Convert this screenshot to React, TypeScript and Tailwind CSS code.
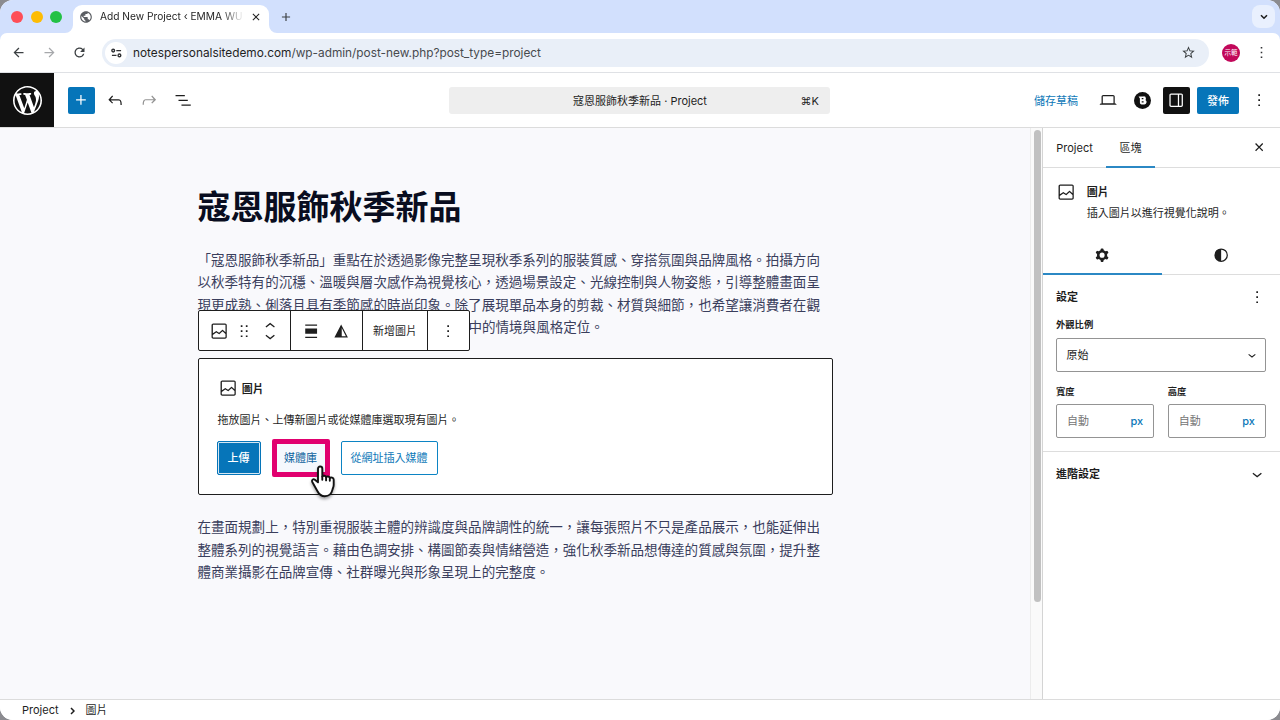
import type { ReactNode } from "react";
import { MdPublic, MdArrowBack, MdArrowForward, MdRefresh, MdStarBorder, MdClose, MdAdd } from "react-icons/md";

const paths = {
  plus: "M11 12.5V17.5H12.5V12.5H17.5V11H12.5V6H11V11H6V12.5H11Z",
  undo: "M18.3 11.7c-.6-.6-1.4-.9-2.3-.9H6.7l2.9-3.3-1.1-1-4.5 5L8.5 16l1-1-2.7-2.7H16c.5 0 .9.2 1.3.5 1 1 1 3.4 1 4.5v.3h1.5v-.2c0-1.5 0-4.3-1.5-5.7z",
  redo: "M15.6 6.5l-1.1 1 2.9 3.3H8c-.9 0-1.7.3-2.3.9-1.4 1.5-1.4 4.2-1.4 5.6v.2h1.5v-.3c0-1.1 0-3.5 1-4.5.3-.3.7-.5 1.3-.5h9.2L14.5 15l1.1 1.1 4.6-4.6-4.6-5z",
  listView: "M3 6h11v1.5H3V6Zm3.5 5.5h11V13h-11v-1.5ZM21 17H10v1.5h11V17Z",
  laptop:
    "M20.5 16h-.7V8c0-1.1-.9-2-2-2H6.2c-1.1 0-2 .9-2 2v8h-.7c-.8 0-1.5.7-1.5 1.5h20c0-.8-.7-1.5-1.5-1.5zM5.7 8c0-.3.2-.5.5-.5h11.6c.3 0 .5.2.5.5v7.6H5.7V8z",
  drawer:
    "M18 4H6c-1.1 0-2 .9-2 2v12c0 1.1.9 2 2 2h12c1.1 0 2-.9 2-2V6c0-1.1-.9-2-2-2zm-4 14.5H6c-.3 0-.5-.2-.5-.5V6c0-.3.2-.5.5-.5h8v13zm4.5-.5c0 .3-.2.5-.5.5h-2.5v-13H18c.3 0 .5.2.5.5v12z",
  more: "M13 19h-2v-2h2v2zm0-6h-2v-2h2v2zm0-6h-2V5h2v2z",
  close:
    "M12 13.06l3.712 3.713 1.061-1.06L13.061 12l3.712-3.712-1.06-1.06L12 10.938 8.288 7.227l-1.061 1.06L10.939 12l-3.712 3.712 1.06 1.061L12 13.061z",
  image:
    "M19 3H5c-1.1 0-2 .9-2 2v14c0 1.1.9 2 2 2h14c1.1 0 2-.9 2-2V5c0-1.1-.9-2-2-2zM5 4.5h14c.3 0 .5.2.5.5v8.4l-3-2.9c-.3-.3-.8-.3-1 0L11.9 14 9 12c-.3-.2-.6-.2-.8 0l-3.6 2.6V5c-.1-.3.1-.5.4-.5zm14 15H5c-.3 0-.5-.2-.5-.5v-2.4l4.1-3 3 1.9c.3.2.7.2.9-.1L16 12l3.5 3.4V19c0 .3-.2.5-.5.5z",
  drag: "M8 7h2V5H8v2zm0 6h2v-2H8v2zm0 6h2v-2H8v2zm6-14v2h2V5h-2zm0 8h2v-2h-2v2zm0 6h2v-2h-2v2z",
  up: "M6.5 12.4L12 8l5.5 4.4-.9 1.2L12 10l-4.5 3.6-1-1.2z",
  down: "M17.5 11.6L12 16l-5.5-4.4.9-1.2L12 14l4.5-3.6 1 1.2z",
  align: "M19 5.5H5V4h14v1.5ZM19 20H5v-1.5h14V20ZM5 9h14v6H5V9Z",
  duotone: "M12 4L4 19.5h16L12 4Zm.7 4.4l4.9 9.7h-4.9V8.4Z",
  cog: "M10.289 4.836A1 1 0 0111.275 4h1.306a1 1 0 01.987.836l.244 1.466c.787.26 1.503.679 2.108 1.218l1.393-.522a1 1 0 011.216.437l.653 1.13a1 1 0 01-.23 1.273l-1.148.944a6.025 6.025 0 010 2.435l1.149.946a1 1 0 01.23 1.272l-.653 1.13a1 1 0 01-1.216.437l-1.394-.522c-.605.54-1.32.958-2.108 1.218l-.244 1.466a1 1 0 01-.987.836h-1.306a1 1 0 01-.986-.836l-.244-1.466a5.995 5.995 0 01-2.108-1.218l-1.394.522a1 1 0 01-1.217-.436l-.653-1.131a1 1 0 01.23-1.272l1.149-.946a6.026 6.026 0 010-2.435l-1.148-.944a1 1 0 01-.23-1.272l.653-1.131a1 1 0 011.217-.437l1.393.522a5.994 5.994 0 012.108-1.218l.244-1.466zM14.929 12a3 3 0 11-6 0 3 3 0 016 0z",
  styles: "M20 12a8 8 0 1 1-16 0 8 8 0 0 1 16 0Zm-1.5 0a6.5 6.5 0 0 1-6.5 6.5v-13a6.5 6.5 0 0 1 6.5 6.5Z"
};

const introLines = [
  "「寇恩服飾秋季新品」重點在於透過影像完整呈現秋季系列的服裝質感、穿搭氛圍與品牌風格。拍攝方向",
  "以秋季特有的沉穩、溫暖與層次感作為視覺核心，透過場景設定、光線控制與人物姿態，引導整體畫面呈",
  "現更成熟、俐落且具有季節感的時尚印象。除了展現單品本身的剪裁、材質與細節，也希望讓消費者在觀"
];

const outroLines = [
  "在畫面規劃上，特別重視服裝主體的辨識度與品牌調性的統一，讓每張照片不只是產品展示，也能延伸出",
  "整體系列的視覺語言。藉由色調安排、構圖節奏與情緒營造，強化秋季新品想傳達的質感與氛圍，提升整",
  "體商業攝影在品牌宣傳、社群曝光與形象呈現上的完整度。"
];

function Icon({ name, size = 20.3, className = "" }: { name: keyof typeof paths; size?: number; className?: string }) {
  return (
    <svg viewBox="0 0 24 24" width={size} height={size} fill="currentColor" fillRule="evenodd" className={`shrink-0 ${className}`}>
      <path d={paths[name]} />
    </svg>
  );
}

function WordPressLogo() {
  return (
    <svg viewBox="0 0 20 20" width="29" height="29" fill="currentColor">
      <path d="M20 10c0-5.51-4.49-10-10-10C4.48 0 0 4.49 0 10c0 5.52 4.48 10 10 10 5.51 0 10-4.48 10-10zM7.78 15.37L4.37 6.22c.55-.02 1.17-.08 1.17-.08.5-.06.44-1.13-.06-1.11 0 0-1.45.11-2.37.11-.18 0-.37 0-.58-.01C4.12 2.69 6.87 1.11 10 1.11c2.33 0 4.45.87 6.05 2.34-.68-.11-1.65.39-1.65 1.58 0 .74.45 1.36.9 2.1.35.61.55 1.36.55 2.46 0 1.49-1.4 5-1.4 5l-3.03-8.37c.54-.02.82-.17.82-.17.5-.05.44-1.25-.06-1.22 0 0-1.44.12-2.38.12-.87 0-2.33-.12-2.33-.12-.5-.03-.56 1.2-.06 1.22l.92.08 1.26 3.41zM17.41 10c.24-.64.74-1.87.43-4.25.7 1.29 1.05 2.71 1.05 4.25 0 3.29-1.73 6.24-4.4 7.78.97-2.59 1.94-5.2 2.92-7.78zM6.1 18.09C3.12 16.65 1.11 13.53 1.11 10c0-1.3.23-2.48.72-3.59C3.25 10.3 4.67 14.2 6.1 18.09zm4.03-6.63l2.58 6.98c-.86.29-1.76.45-2.71.45-.79 0-1.57-.11-2.29-.33.81-2.38 1.62-4.74 2.42-7.1z" />
    </svg>
  );
}

function IconButton({ children, className = "" }: { children: ReactNode; className?: string }) {
  return <button className={`grid size-[27px] shrink-0 place-items-center rounded-[2px] ${className}`}>{children}</button>;
}

function TabStrip() {
  return (
    <div className="flex h-[33px] items-end bg-[#d2e0fd]">
      <div className="flex h-[33px] w-[65px] shrink-0 items-center gap-[7.5px] pl-[11px]">
        <span className="size-3 rounded-full bg-[#fe4e57]" />
        <span className="size-3 rounded-full bg-[#fdbc04]" />
        <span className="size-3 rounded-full bg-[#23c145]" />
      </div>
      <svg width="8" height="8" className="shrink-0 fill-white">
        <path d="M0 8A8 8 0 0 0 8 0V8Z" />
      </svg>
      <div className="flex h-7 w-[196px] shrink-0 items-center rounded-t-[9px] bg-white pb-1 pl-[6px] pr-[7px]">
        <MdPublic size={14} className="shrink-0 text-[#5b5e63]" />
        <span className="ml-[7px] w-[148px] whitespace-nowrap text-[10.2px] text-[#1f1f1f] [mask-image:linear-gradient(90deg,#000_122px,transparent_144px)]">
          Add New Project ‹ EMMA WU
        </span>
        <MdClose size={12} className="ml-auto shrink-0 text-[#1f1f1f]" />
      </div>
      <svg width="8" height="8" className="shrink-0 fill-white">
        <path d="M8 8A8 8 0 0 1 0 0V8Z" />
      </svg>
      <MdAdd size={14} className="mb-[9.5px] ml-[2px] text-[#3c4043]" />
      <div className="mb-[5px] ml-auto mr-[5px] grid size-[23px] place-items-center rounded-[8px] bg-[#e9f0fe]">
        <svg width="8" height="6" viewBox="0 0 8 6" fill="none" stroke="#1f1f1f" strokeWidth="1.6">
          <path d="M1 1.2l3 3 3-3" />
        </svg>
      </div>
    </div>
  );
}

function AddressBar() {
  return (
    <div className="bg-[#d2e0fd]">
      <div className="flex h-10 items-center rounded-t-[7px] border-b border-[#dfe1e5] bg-white pl-[11px]">
        <MdArrowBack size={15} className="text-[#3c4043]" />
        <MdArrowForward size={15} className="ml-[15.5px] text-[#a6a8ab]" />
        <MdRefresh size={15} className="ml-[15.5px] text-[#3c4043]" />
        <div className="ml-[15px] flex h-7 w-[1107px] items-center rounded-full bg-[#e9eff8] pl-[3px] pr-[13px]">
          <span className="grid size-[22px] place-items-center rounded-full bg-white">
            <svg width="11" height="10" viewBox="0 0 12 10" fill="none" stroke="#303134" strokeWidth="1.5">
              <circle cx="2.4" cy="2.4" r="1.5" />
              <path d="M5.8 2.4H11M1 7.6h5" />
              <circle cx="9.2" cy="7.6" r="1.5" />
            </svg>
          </span>
          <span className="ml-[6px] pt-[2px] text-[11.84px] text-[#1f1f1f]">
            notespersonalsitedemo.com<span className="text-[#474a4e]">/wp-admin/post-new.php?post_type=project</span>
          </span>
          <MdStarBorder size={15} className="ml-auto text-[#3c4043]" />
        </div>
        <span className="ml-[13px] grid size-[18px] place-items-center rounded-full bg-[#c2085a] pt-px text-[6.5px] leading-none text-white">
          示範
        </span>
        <Icon name="more" size={19} className="ml-[12px] text-[#303134]" />
      </div>
    </div>
  );
}

function EditorHeader() {
  return (
    <header className="grid h-[55px] grid-cols-[1fr_381px_1fr] items-center border-b border-[#dcdcdc] bg-white pr-px">
      <div className="flex items-center gap-[7px]">
        <div className="mr-[7px] grid size-[54px] place-items-center bg-[#111] text-white">
          <WordPressLogo />
        </div>
        <IconButton className="bg-[#0675b9] text-white">
          <Icon name="plus" />
        </IconButton>
        <IconButton>
          <Icon name="undo" />
        </IconButton>
        <IconButton className="text-[#949494]">
          <Icon name="redo" />
        </IconButton>
        <IconButton>
          <Icon name="listView" />
        </IconButton>
      </div>
      <div className="grid h-[27px] grid-cols-[1fr_auto_1fr] items-center rounded-[3px] bg-[#eee] pl-px pt-[2px] text-[11px]">
        <span />
        <span>寇恩服飾秋季新品 · Project</span>
        <span className="pr-[11px] text-right">⌘K</span>
      </div>
      <div className="flex items-center justify-end gap-[7px] pr-[6px]">
        <button className="px-[10px] pt-[2px] text-[11px] text-[#0c78b8]">儲存草稿</button>
        <IconButton>
          <Icon name="laptop" />
        </IconButton>
        <IconButton>
          <svg width="17" height="17" viewBox="0 0 17 17">
            <circle cx="8.5" cy="8.5" r="8.5" fill="#111" />
            <path d="M4.6 4.4h4.8a2.2 2.2 0 0 1 2.5 2.1 2 2 0 0 1-.4 1.5 2.4 2.4 0 0 1-1.6 4.4H7.6a1.7 1.7 0 0 1-1.7-1.6V6.6Z" fill="#fff" />
            <path d="M7.7 6.7h1.7M7.7 9.9h1.9" stroke="#111" strokeWidth="1.2" />
          </svg>
        </IconButton>
        <IconButton className="bg-[#111] text-white">
          <Icon name="drawer" />
        </IconButton>
        <button className="h-[27px] w-[42px] rounded-[2px] bg-[#0675b9] pt-[2px] text-[11px] font-medium text-white">發佈</button>
        <IconButton>
          <Icon name="more" />
        </IconButton>
      </div>
    </header>
  );
}

function BlockToolbar() {
  return (
    <div className="absolute -left-px top-[-49px] flex h-[41px] w-[272px] divide-x divide-[#1e1e1e] rounded-[2px] border border-[#1e1e1e] bg-white">
      <div className="flex w-[92px] items-center pl-[10px] pt-px">
        <Icon name="image" />
        <Icon name="drag" className="ml-[5.5px]" />
        <div className="ml-[5px] flex flex-col">
          <Icon name="up" className="-mb-[5px]" />
          <Icon name="down" className="-mt-[5px]" />
        </div>
      </div>
      <div className="flex w-[72px] items-center gap-[10px] pl-[10.5px] pt-px">
        <Icon name="align" />
        <Icon name="duotone" />
      </div>
      <div className="grid w-[65px] place-items-center pt-[2px] pl-px text-[11px]">新增圖片</div>
      <div className="grid flex-1 place-items-center pt-px pl-px">
        <Icon name="more" />
      </div>
    </div>
  );
}

function HandCursor() {
  return (
    <svg
      width="27"
      height="33"
      viewBox="0 0 27 33"
      className="absolute left-[37px] top-[24px] drop-shadow-[0_2px_1.5px_rgba(0,0,0,0.35)]"
      fill="#fff"
      stroke="#111"
      strokeWidth="1.9"
      strokeLinejoin="round"
      strokeLinecap="round"
    >
      <path d="M8 17.3V3.7a2.15 2.15 0 0 1 4.3 0v7.8c.8-1.2 3.5-1 3.8.6.9-1.1 3.4-.8 3.7.8 1-.8 3.9-.4 3.9 1.8v5c0 2.5-.9 3.4-1.3 5.2-.9 4.2-3.6 6.3-7.6 6.3-3.4 0-5.6-1.7-7.3-5L2.3 17c-.9-2 .9-3.5 2.6-2.3Z" />
      <path d="M12.3 11.8v3M16.1 12.4v3M19.8 13.2v2.6" />
    </svg>
  );
}

function ImagePlaceholder() {
  return (
    <section className="relative mt-[19.5px] h-[137px] w-[635px] rounded-[2px] border border-[#1e1e1e] bg-white pl-[18px] pt-[19px]">
      <BlockToolbar />
      <div className="flex h-[21px] items-center gap-[4px] pl-px text-[11px] font-bold">
        <Icon name="image" />
        <span className="pt-px">圖片</span>
      </div>
      <p className="mt-[13px] pl-px text-[11px] leading-4">拖放圖片、上傳新圖片或從媒體庫選取現有圖片。</p>
      <div className="mt-[13px] flex h-[34px] text-[11px]">
        <button className="w-11 rounded-[2px] border border-[#0675b9] bg-[#0675b9] pt-px font-medium text-white shadow-[inset_0_0_0_1px_#d5e7f3]">
          上傳
        </button>
        <div className="relative ml-3 w-[56px]">
          <button className="h-full w-full bg-[#f5f8fd] pt-px text-[#0a5f9c]">媒體庫</button>
          <span className="absolute -inset-x-px -inset-y-[2px] rounded-[2px] border-[5px] border-[#e1006f]" />
          <HandCursor />
        </div>
        <button className="ml-3 w-[97px] rounded-[2px] border border-[#0c84c4] pt-px text-[#0c78b8]">從網址插入媒體</button>
      </div>
    </section>
  );
}

function Canvas() {
  return (
    <main className="flex min-w-0 flex-1 bg-[#f9f9fc]">
      <div className="flex-1 pl-[197.5px] pt-[54px]">
        <h1 className="h-[50px] whitespace-nowrap text-[33px] font-bold leading-[50px] text-[#090d20]">寇恩服飾秋季新品</h1>
        <div className="mt-[16.5px] whitespace-nowrap text-[13.54px] leading-[22.5px] text-[#3a3e5c]">
          {introLines.map((line) => (
            <p key={line}>{line}</p>
          ))}
          <p className="pl-[271px]">中的情境與風格定位。</p>
        </div>
        <ImagePlaceholder />
        <div className="mt-[21px] whitespace-nowrap text-[13.54px] leading-[22.5px] text-[#3a3e5c]">
          {outroLines.map((line) => (
            <p key={line}>{line}</p>
          ))}
        </div>
      </div>
      <div className="w-3 border-l border-[#ececec] bg-[#fafafa] pl-[3px] pt-[2px]">
        <div className="h-[472px] w-[7px] rounded-full bg-[#c1c1c1]" />
      </div>
    </main>
  );
}

function UnitInput({ label }: { label: string }) {
  return (
    <label className="block flex-1">
      <span className="block h-[13px] text-[9.3px] font-bold leading-[13px]">{label}</span>
      <span className="mt-[6px] flex h-[34px] items-center justify-between rounded-[2px] border border-[#949494] px-[10px] pt-px text-[11px] text-[#757575]">
        自動<span className="font-medium text-[#0c78b8]">px</span>
      </span>
    </label>
  );
}

function Sidebar() {
  return (
    <aside className="w-[238px] shrink-0 border-l border-[#d4d4d4] bg-white text-[11px]">
      <div className="flex h-10 border-b border-[#ddd]">
        <span className="grid w-[63px] place-items-center pt-px">Project</span>
        <span className="relative grid w-[49px] place-items-center pt-px">
          區塊
          <span className="absolute inset-x-0 -bottom-px h-[2px] bg-[#2b88c4]" />
        </span>
        <Icon name="close" className="my-auto ml-auto mr-[10.5px]" />
      </div>
      <div className="flex h-[67px] gap-[10.5px] pl-[13px] pt-[14px]">
        <Icon name="image" />
        <div>
          <div className="h-[21px] font-bold leading-[20px]">圖片</div>
          <p className="leading-[21px]">插入圖片以進行視覺化說明。</p>
        </div>
      </div>
      <div className="flex h-10 border-b border-[#ddd]">
        <span className="relative grid flex-1 place-items-center pt-px">
          <Icon name="cog" />
          <span className="absolute inset-x-0 -bottom-px h-[2px] bg-[#2b88c4]" />
        </span>
        <span className="grid flex-1 place-items-center pt-px">
          <Icon name="styles" />
        </span>
      </div>
      <div className="h-[177px] border-b border-[#ddd] px-[13px] pt-3">
        <div className="flex h-[20px] items-center justify-between font-bold">
          設定
          <Icon name="more" />
        </div>
        <div className="mt-[11px] h-[13px] text-[9.3px] font-bold leading-[13px]">外觀比例</div>
        <div className="mr-px mt-[7px] flex h-[34px] items-center justify-between rounded-[2px] border border-[#949494] pl-[9.5px] pr-[5px]">
          原始
          <Icon name="down" size={16} />
        </div>
        <div className="mr-px mt-[13px] flex gap-[13.5px]">
          <UnitInput label="寬度" />
          <UnitInput label="高度" />
        </div>
      </div>
      <div className="flex h-11 items-center justify-between px-[13px] font-bold">
        進階設定
        <Icon name="down" />
      </div>
    </aside>
  );
}

export default function App() {
  return (
    <div
      lang="zh-Hant-TW"
      className="h-[720px] w-[1280px] overflow-hidden bg-[#8b8b90] text-[#1e1e1e] [font-family:Inter,'Noto_Sans_CJK_TC',sans-serif]"
    >
      <div className="flex h-full flex-col overflow-hidden rounded-[13px] bg-white">
        <TabStrip />
        <AddressBar />
        <EditorHeader />
        <div className="flex min-h-0 flex-1">
          <Canvas />
          <Sidebar />
        </div>
        <footer className="flex h-[21px] items-center border-t border-[#dcdcdc] bg-white pl-[22px] pt-px text-[11px]">
          Project
          <svg width="5" height="8" viewBox="0 0 5 8" className="ml-[11px] mr-[11px]" fill="none" stroke="#1e1e1e" strokeWidth="1.5">
            <path d="M1 1l3 3-3 3" />
          </svg>
          圖片
        </footer>
      </div>
    </div>
  );
}
